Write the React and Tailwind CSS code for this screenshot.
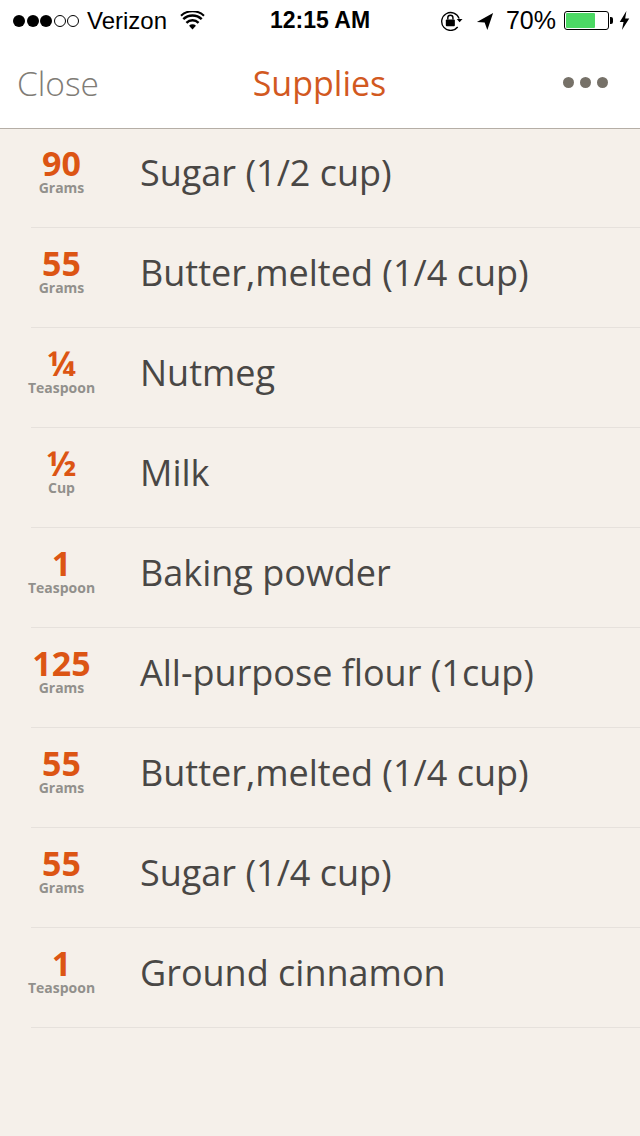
const rows = [
  ["90", "Grams", "Sugar (1/2 cup)"],
  ["55", "Grams", "Butter,melted (1/4 cup)"],
  ["¼", "Teaspoon", "Nutmeg"],
  ["½", "Cup", "Milk"],
  ["1", "Teaspoon", "Baking powder"],
  ["125", "Grams", "All-purpose flour (1cup)"],
  ["55", "Grams", "Butter,melted (1/4 cup)"],
  ["55", "Grams", "Sugar (1/4 cup)"],
  ["1", "Teaspoon", "Ground cinnamon"],
];

function Signal() {
  return (
    <div className="flex items-center gap-[1.5px]">
      {[0, 1, 2].map((i) => <span key={i} className="w-[12px] h-[12px] rounded-full bg-black" />)}
      {[0, 1].map((i) => <span key={i} className="w-[12px] h-[12px] rounded-full border border-black" />)}
    </div>
  );
}

function Wifi() {
  return (
    <svg width="25" height="19" viewBox="0 0 26 20">
      <path d="M13 19.5 9.4 15.4a5.2 5.2 0 0 1 7.2 0Z" fill="#000" />
      <path d="M6.6 12.4a9.3 9.3 0 0 1 12.8 0" fill="none" stroke="#000" strokeWidth="2.6" />
      <path d="M3.3 8.6a14 14 0 0 1 19.4 0" fill="none" stroke="#000" strokeWidth="2.6" />
      <path d="M.9 4.9a18 18 0 0 1 24.2 0" fill="none" stroke="#000" strokeWidth="2.2" />
    </svg>
  );
}

function Lock() {
  return (
    <svg width="24" height="20" viewBox="0 0 24 21">
      <path d="M19.5 8A9.4 9.4 0 1 0 18 16.8" fill="none" stroke="#000" strokeWidth="1.4" />
      <path d="M17 8.5h6l-3 3.4Z" fill="#000" />
      <rect x="5.5" y="9" width="9.5" height="7" rx="1" fill="#000" />
      <path d="M7.6 9V7.2a2.7 2.7 0 0 1 5.4 0V9" fill="none" stroke="#000" strokeWidth="1.5" />
    </svg>
  );
}

function Arrow() {
  return (
    <svg width="18" height="18" viewBox="0 0 20 20">
      <path d="M19 1 1 11.2l8.6.5L12.6 20Z" fill="#000" />
    </svg>
  );
}

function Bolt() {
  return (
    <svg width="11" height="19" viewBox="0 0 11 20">
      <path d="M7.5 0 .5 11.5h4L2.8 20l7.7-12h-4.3Z" fill="#000" />
    </svg>
  );
}

function Battery() {
  return (
    <div className="flex items-center">
      <div className="w-[45px] h-[19px] rounded-[3px] border border-black p-[1px]">
        <div className="w-[29px] h-full bg-[#4cd964] rounded-[1px]" />
      </div>
      <div className="w-[3px] h-[7px] bg-black rounded-r-[2px] ml-[1px]" />
    </div>
  );
}

export default function App() {
  return (
    <div className="w-[640px] h-[1136px] bg-[#f5f0ea] flex flex-col overflow-hidden font-['Open_Sans',sans-serif]">
      <header className="h-[129px] bg-white border-b border-[#b5aea6] flex flex-col shrink-0">
        <div className="h-[41px] pl-[13px] pr-[10px] flex items-center font-['Liberation_Sans',sans-serif] text-black text-[24px]">
          <div className="flex items-center w-[257px] shrink-0">
            <Signal />
            <span className="ml-[8px]">Verizon</span>
            <span className="ml-[13px]"><Wifi /></span>
          </div>
          <span className="font-bold text-[23px] whitespace-nowrap">12:15 AM</span>
          <div className="flex-1 flex items-center justify-end">
            <Lock />
            <span className="ml-[12px]"><Arrow /></span>
            <span className="ml-[12px] text-[25px]">70%</span>
            <span className="ml-[8px]"><Battery /></span>
            <span className="ml-[6px]"><Bolt /></span>
          </div>
        </div>
        <div className="flex-1 flex items-start pl-[17px] pr-[32px] pt-[20px]">
          <span className="flex-1 text-[33.5px] leading-[44px] font-light text-[#807c76]">Close</span>
          <span className="text-[34px] leading-[44px] font-normal text-[#d2591f] ml-[14px]">Supplies</span>
          <div className="flex-1 flex justify-end gap-[6px] mt-[16px]">
            {[0, 1, 2].map((i) => <span key={i} className="w-[11px] h-[11px] rounded-full bg-[#767168]" />)}
          </div>
        </div>
      </header>
      <ul className="pl-[31px] -mt-[1px]">
        {rows.map(([n, u, t], i) => (
          <li key={i} className="flex items-center h-[100px] border-b border-[#e6e1dc]">
            <div className="w-[61px] flex flex-col items-center shrink-0 mb-[10px]">
              <span className="text-[34px] leading-[30px] font-bold text-[#dc5514] whitespace-nowrap">{n}</span>
              <span className="text-[14px] leading-[20px] font-bold text-[#92908c] whitespace-nowrap">{u}</span>
            </div>
            <span className="ml-[48px] text-[36px] leading-[48px] text-[#494745] whitespace-nowrap mb-[10px]">{t}</span>
          </li>
        ))}
      </ul>
    </div>
  );
}
